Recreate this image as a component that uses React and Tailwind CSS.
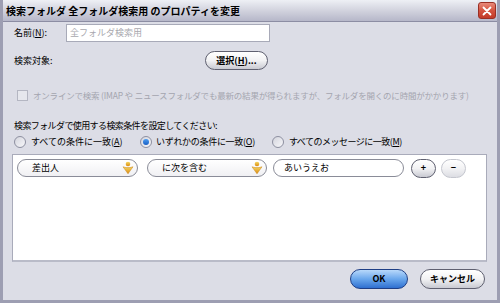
import React from 'react';

const font = { fontFamily: '"Noto Sans CJK JP", "Liberation Sans", sans-serif' };

function Person() {
  return (
    <svg width="14" height="14" viewBox="0 0 14 14">
      <defs>
        <linearGradient id="pg" x1="0" y1="0" x2="0" y2="1">
          <stop offset="0" stopColor="#f7d862" />
          <stop offset="1" stopColor="#d98a10" />
        </linearGradient>
      </defs>
      <circle cx="7" cy="3" r="2.3" fill="url(#pg)" />
      <path d="M2 5.8 L5 6.6 L9 6.6 L12 5.8 L7 12.8 Z" fill="url(#pg)" stroke="#c98314" strokeWidth="0.5" />
    </svg>
  );
}

function Radio({ on }) {
  return (
    <span className="w-[12px] h-[12px] rounded-full border border-[#8d8fa0] bg-gradient-to-br from-[#d4d5dd] to-[#f7f7fa] flex items-center justify-center">
      {on && <span className="w-[6px] h-[6px] rounded-full bg-gradient-to-b from-[#4c9cf0] to-[#1a5fc4]" />}
    </span>
  );
}

function Pill({ children, className = '' }) {
  return (
    <div className={`h-[19px] rounded-full border border-[#5f6070] bg-gradient-to-b from-white via-[#f2f2f4] to-[#c9cad2] flex items-center justify-center text-[9px] font-bold text-black ${className}`}>
      {children}
    </div>
  );
}

function Select({ label, w }) {
  return (
    <div className={`${w} h-[18px] rounded-full border border-[#8a8c98] bg-gradient-to-b from-white to-[#f0f0f3] flex items-center pl-[14px] pr-[2px] text-[9px] text-black`}>
      <span className="flex-1">{label}</span>
      <Person />
    </div>
  );
}

export default function App() {
  return (
    <div style={font} className="w-[500px] h-[303px] bg-[#dcdde6] flex flex-col border-x-[3px] border-b-[3px] border-[#9d9eb2] overflow-hidden">
      <div className="h-[22px] shrink-0 bg-gradient-to-b from-[#eef0f5] via-[#d2d3de] to-[#b6b7c9] border-b border-[#8c8da3] flex items-center pl-[3px] pr-[1px]">
        <span className="text-[10px] font-bold text-black flex-1 whitespace-pre">検索フォルダ 全フォルダ検索用 のプロパティを変更</span>
        <div className="w-[18px] h-[17px] rounded-[3px] border border-[#9a2f24] bg-gradient-to-b from-[#e8897a] via-[#d4533f] to-[#c23a28] flex items-center justify-center">
          <svg width="10" height="10" viewBox="0 0 10 10"><path d="M1.5 1.5 L8.5 8.5 M8.5 1.5 L1.5 8.5" stroke="white" strokeWidth="1.8" strokeLinecap="round" /></svg>
        </div>
      </div>

      <div className="flex items-center mt-[2px] pl-[11px] h-[18px]">
        <span className="w-[52px] text-[9px] text-black">名前(<u>N</u>):</span>
        <div className="w-[204px] h-[18px] bg-white border border-[#a8aab8] flex items-center px-[3px] text-[9px] text-[#a8a8ae]">全フォルダ検索用</div>
      </div>

      <div className="flex items-center mt-[9px] pl-[11px] h-[19px]">
        <span className="w-[191px] text-[9px] text-black">検索対象:</span>
        <Pill className="w-[63px]">選択(<u>H</u>)...</Pill>
      </div>

      <div className="flex items-center mt-[18px] pl-[14px] h-[14px] gap-[5px]">
        <span className="w-[11px] h-[11px] border border-[#b4b6c2] bg-[#e6e7ed]" />
        <span className="text-[8.5px] text-[#a4a5af] tracking-[-0.2px] whitespace-pre">オンラインで検索 (IMAP や ニュースフォルダでも最新の結果が得られますが、フォルダを開くのに時間がかかります)</span>
      </div>

      <div className="mt-[17px] pl-[11px] h-[14px] flex items-center text-[9px] text-black tracking-[-0.6px]">検索フォルダで使用する検索条件を設定してください:</div>

      <div className="flex items-center mt-[2px] pl-[11px] h-[14px] text-[9px] text-black">
        <div className="flex items-center gap-[5px] w-[126px]"><Radio /><span>すべての条件に一致(<u>A</u>)</span></div>
        <div className="flex items-center gap-[4px] w-[132px]"><Radio on /><span className="tracking-[-0.3px]">いずれかの条件に一致(<u>O</u>)</span></div>
        <div className="flex items-center gap-[5px]"><Radio /><span className="tracking-[-0.5px]">すべてのメッセージに一致(<u>M</u>)</span></div>
      </div>

      <div className="mt-[5px] ml-[9px] w-[475px] h-[108px] bg-white border border-[#a9abba] border-b-2 border-b-[#b9bbc8] pt-[4px] pl-[4px]">
        <div className="flex items-center h-[18px]">
          <Select label="差出人" w="w-[121px]" />
          <div className="w-[9px]" />
          <Select label="に次を含む" w="w-[120px]" />
          <div className="w-[6px]" />
          <div className="w-[131px] h-[18px] rounded-full border border-[#8a8c98] bg-white flex items-center pl-[10px] text-[9px] text-black">あいうえお</div>
          <div className="w-[7px]" />
          <Pill className="w-[25px] h-[17px]">+</Pill>
          <div className="w-[5px]" />
          <Pill className="w-[25px] h-[17px] border-[#c4c6ce] from-[#f8f8fa] via-[#f0f0f3] to-[#dcdde3] text-[#c8c8d0]">−</Pill>
        </div>
      </div>

      <div className="flex items-center mt-[7px] pl-[347px] h-[20px]">
        <div className="w-[58px] h-[20px] rounded-full border border-[#1f3f86] bg-gradient-to-b from-[#b8d8fa] via-[#6aa7ec] to-[#2f6fd0] flex items-center justify-center text-[9px] font-bold text-black">OK</div>
        <div className="w-[12px]" />
        <Pill className="w-[65px] h-[20px]">キャンセル</Pill>
      </div>
    </div>
  );
}
